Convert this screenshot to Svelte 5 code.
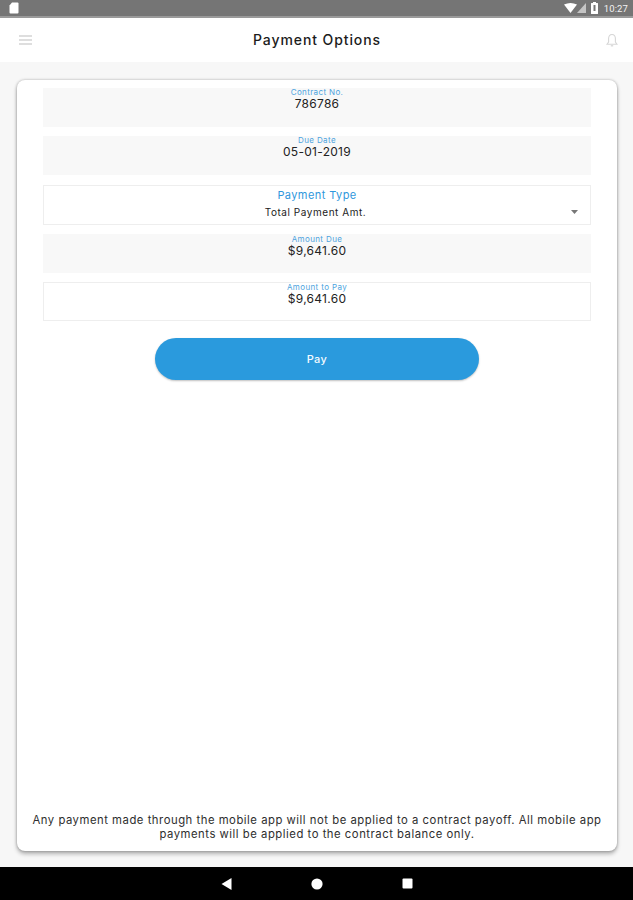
<script>
  const readonly1 = [
    { label: 'Contract No.', value: '786786' },
    { label: 'Due Date', value: '05-01-2019' }
  ];
</script>

<div class="screen">
  <div class="status">
    <svg class="sim" width="10" height="12" viewBox="0 0 10 12"><path d="M3 0.5H8.5a1 1 0 0 1 1 1V10.5a1 1 0 0 1-1 1H1.5a1 1 0 0 1-1-1V3.5z" fill="#fff"/></svg>
    <div class="status-right">
      <svg width="13" height="10" viewBox="0 0 13 10"><path d="M0 1.5Q6.5-1.5 13 1.5L6.5 10z" fill="#fff"/></svg>
      <svg class="signal" width="9" height="10" viewBox="0 0 9 10"><path d="M9 0V10H0z" fill="#c4c4c4"/></svg>
      <svg class="batt" width="7" height="12" viewBox="0 0 7 12"><path d="M2 0H5V1H6.5a.5.5 0 0 1 .5.5V11.5a.5.5 0 0 1-.5.5H.5a.5.5 0 0 1-.5-.5V1.5A.5.5 0 0 1 .5 1H2z" fill="#fff"/><rect x="2.5" y="3" width="2" height="6" fill="#777"/></svg>
      <span class="time">10:27</span>
    </div>
  </div>

  <header>
    <svg width="13" height="11" viewBox="0 0 13 11"><path d="M0 1H13M0 5H13M0 9H13" stroke="#d4d4d4" stroke-width="1.6"/></svg>
    <h1>Payment Options</h1>
    <svg width="12" height="15" viewBox="0 0 12 15"><path d="M6 1.5C3.6 1.5 2.6 3.4 2.6 5.6V9L1 11.3H11L9.4 9V5.6C9.4 3.4 8.4 1.5 6 1.5Z" fill="none" stroke="#d6d6d6" stroke-width="1.1"/><path d="M4.8 12.8H7.2" stroke="#d6d6d6" stroke-width="1.3"/></svg>
  </header>

  <main>
    <section class="card">
      <div class="form">
        {#each readonly1 as f}
          <div class="field filled">
            <span class="label">{f.label}</span>
            <span class="value">{f.value}</span>
          </div>
        {/each}
        <div class="field outlined select">
          <span class="type-label">Payment Type</span>
          <span class="type-value">Total Payment Amt.</span>
          <svg class="caret" width="7" height="4" viewBox="0 0 7 4"><path d="M0 0H7L3.5 4z" fill="#777"/></svg>
        </div>
        <div class="field filled due">
          <span class="label">Amount Due</span>
          <span class="value">$9,641.60</span>
        </div>
        <div class="field outlined">
          <span class="label">Amount to Pay</span>
          <span class="value">$9,641.60</span>
        </div>
        <button>Pay</button>
      </div>
      <p>Any payment made through the mobile app will not be applied to a contract payoff. All mobile app payments will be applied to the contract balance only.</p>
    </section>
  </main>

  <nav>
    <svg width="11" height="12" viewBox="0 0 11 12"><path d="M10.5 0V12L0.5 6z" fill="#fff"/></svg>
    <svg width="12" height="12" viewBox="0 0 12 12"><circle cx="6" cy="6" r="5.6" fill="#fff"/></svg>
    <svg width="11" height="11" viewBox="0 0 11 11"><rect x="0.5" y="0.5" width="10" height="10" rx="1" fill="#fff"/></svg>
  </nav>
</div>

<style>
  :global(body) { margin: 0; }
  .screen {
    width: 633px;
    height: 900px;
    display: flex;
    flex-direction: column;
    background: #f7f7f7;
    font-family: Inter, "Liberation Sans", sans-serif;
    color: #222;
    overflow: hidden;
  }
  .status {
    height: 16px;
    background: #757575;
    border-bottom: 2px solid #9a9a9a;
    display: flex;
    align-items: center;
    justify-content: space-between;
    padding: 0 5px 0 9px;
    flex: none;
  }
  .status-right { display: flex; align-items: center; }
  .batt { margin-left: 5px; margin-right: 1px; }
  .time { margin-left: 5px; font-size: 9.5px; color: #f2f2f2; letter-spacing: 0.1px; font-family: Roboto, sans-serif; }
  header {
    height: 44px;
    background: #fff;
    display: flex;
    align-items: center;
    justify-content: space-between;
    padding: 0 15px 0 19px;
    flex: none;
  }
  h1 {
    margin: 0 4px 2px 0;
    font-size: 14px;
    font-weight: 500;
    letter-spacing: 0.9px;
    color: #1c1c1c;
  }
  main {
    flex: 1;
    min-height: 0;
    padding: 18px 16px 16px 17px;
    display: flex;
  }
  .card {
    flex: 1;
    background: #fff;
    border-radius: 8px;
    box-shadow: 0 3px 4px rgba(0,0,0,.28), 0 0 3px rgba(0,0,0,.28);
    padding: 8px 26px 10px 26px;
    display: flex;
    flex-direction: column;
    justify-content: space-between;
  }
  .form {
    display: flex;
    flex-direction: column;
    align-items: stretch;
    gap: 9px;
  }
  .field {
    height: 39px;
    box-sizing: border-box;
    display: flex;
    flex-direction: column;
    align-items: center;
    position: relative;
  }
  .filled { background: #f8f8f8; }
  .due { padding-top: 1px; }
  .outlined { border: 1px solid #eeeeee; background: #fff; }
  .label {
    font-size: 8px;
    line-height: 9px;
    letter-spacing: 0.38px;
    color: #4ea3de;
  }
  .value {
    font-size: 12px;
    line-height: 14px;
    color: #222;
    letter-spacing: 0.28px;
  }
  .select { height: 40px; margin-top: 1px; }
  .type-label {
    font-size: 11px;
    line-height: 14px;
    margin-top: 2px;
    color: #2f97dc;
    letter-spacing: 0.42px;
  }
  .type-value {
    font-size: 10px;
    line-height: 12px;
    margin-top: 4px;
    padding-right: 3px;
    color: #222;
    letter-spacing: 0.55px;
  }
  .caret { position: absolute; right: 12px; top: 24px; }
  button {
    align-self: center;
    width: 324px;
    height: 42px;
    margin-top: 8px;
    border: none;
    border-radius: 21px;
    background: #2a9add;
    color: #f4faff;
    font: 500 11px Inter, sans-serif;
    letter-spacing: 0.4px;
    box-shadow: 0 1px 2px rgba(0,0,0,.25);
  }
  p {
    margin: 0 -14px;
    font-size: 11.3px;
    line-height: 14px;
    text-align: center;
    color: #2e2e2e;
    letter-spacing: 0.52px;
  }
  nav {
    height: 33px;
    background: #000;
    display: flex;
    align-items: center;
    justify-content: center;
    gap: 79px;
    flex: none;
  }
</style>
